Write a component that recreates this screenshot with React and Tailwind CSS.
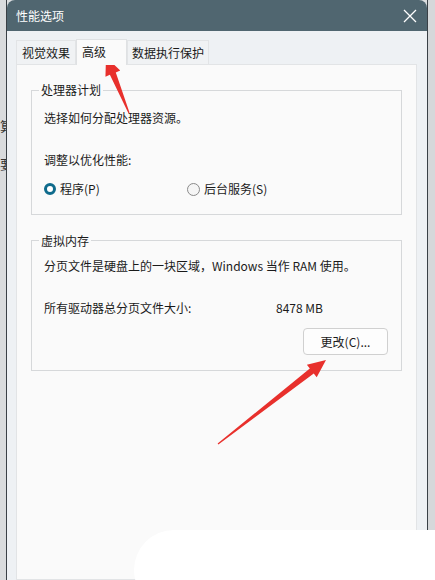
import React from "react";

const font = { fontFamily: '"Microsoft YaHei", "Noto Sans CJK SC", "Noto Sans", sans-serif' };

function Arrow({ x1, y1, x2, y2 }) {
  const dx = x2 - x1, dy = y2 - y1;
  const len = Math.hypot(dx, dy);
  const ux = dx / len, uy = dy / len;
  const px = -uy, py = ux;
  const hl = 18, hw = 8, sw = 3.2;
  const bx = x2 - ux * hl, by = y2 - uy * hl;
  const pts = [
    [x1 + px * 0.6, y1 + py * 0.6],
    [bx + px * sw, by + py * sw],
    [bx + px * hw, by + py * hw],
    [x2, y2],
    [bx - px * hw, by - py * hw],
    [bx - px * sw, by - py * sw],
    [x1 - px * 0.6, y1 - py * 0.6],
  ];
  return <polygon points={pts.map((p) => p.join(",")).join(" ")} fill="#e8302c" />;
}

export default function App() {
  return (
    <div className="relative w-[435px] h-[580px] overflow-hidden bg-[#dcdee0] flex" style={font}>
      {/* left background strip */}
      <div className="w-[7px] shrink-0 bg-[#d9dbdd] border-r border-[#3a4046] relative overflow-hidden text-[13px] text-[#333]">
        <div className="absolute right-[0px] top-[118px] w-[6px] overflow-hidden leading-[16px]">算</div>
        <div className="absolute right-[0px] top-[156px] w-[6px] overflow-hidden leading-[16px]">要</div>
      </div>
      {/* window */}
      <div className="w-[420px] shrink-0 flex flex-col bg-[#eef1f4] rounded-t-[8px] overflow-hidden">
        <div className="h-[31px] bg-[#506670] flex items-center justify-between pl-[9px] pr-[10px] shrink-0">
          <span className="text-white text-[12px]">性能选项</span>
          <svg width="14" height="14" viewBox="0 0 14 14">
            <path d="M1 1 L13 13 M13 1 L1 13" stroke="#ffffff" strokeWidth="1.3" />
          </svg>
        </div>
        <div className="flex-1 flex flex-col pl-[9px] pr-[10px]">
          <div className="flex items-end h-[33px] text-[12px] text-[#1a1a1a]">
            <div className="h-[24px] px-[5px] flex items-center border border-b-0 border-[#e2e4e6] bg-[#f0f2f4]">视觉效果</div>
            <div className="h-[26px] pl-[5px] pr-[20px] flex items-start pt-[3px] border border-b-0 border-[#dfe1e3] bg-[#fafafa] -mb-px relative z-10">高级</div>
            <div className="h-[24px] px-[4px] flex items-center border border-b-0 border-[#e2e4e6] bg-[#f0f2f4]">数据执行保护</div>
          </div>
          <div className="flex-1 bg-[#fafafa] border border-[#e2e4e6] pt-[25px] px-[14px] text-[12px] text-[#1a1a1a]">
            {/* group 1 */}
            <div className="relative border border-[#d6d8da] h-[125px] px-[12px] pt-[17px]">
              <div className="absolute left-[7px] top-[-11px] bg-[#fafafa] px-[2px] leading-[20px]">处理器计划</div>
              <div className="leading-[20px]">选择如何分配处理器资源。</div>
              <div className="leading-[20px] mt-[22px]">调整以优化性能:</div>
              <div className="flex items-center mt-[9px] leading-[20px]">
                <div className="flex items-center w-[143px]">
                  <span className="w-[12px] h-[12px] rounded-full border-[3px] border-[#0f6b8c] bg-white mr-[4px]" />
                  <span>程序(P)</span>
                </div>
                <div className="flex items-center">
                  <span className="w-[13px] h-[13px] rounded-full border border-[#8a8a8a] bg-[#f5f5f5] mr-[4px]" />
                  <span>后台服务(S)</span>
                </div>
              </div>
            </div>
            {/* group 2 */}
            <div className="relative border border-[#d6d8da] h-[131px] mt-[25px] px-[12px] pt-[15px]">
              <div className="absolute left-[7px] top-[-10px] bg-[#fafafa] px-[2px] leading-[20px]">虚拟内存</div>
              <div className="leading-[20px]">分页文件是硬盘上的一块区域，Windows 当作 RAM 使用。</div>
              <div className="flex leading-[20px] mt-[22px]">
                <span className="w-[232px]">所有驱动器总分页文件大小:</span>
                <span>8478 MB</span>
              </div>
              <div className="flex justify-end mt-[10px] pr-[1px]">
                <div className="w-[85px] h-[27px] border border-[#d0d0d0] rounded-[4px] bg-[#fdfdfd] flex items-center justify-center">更改(C)...</div>
              </div>
            </div>
          </div>
        </div>
      </div>
      {/* right strip */}
      <div className="flex-1 bg-[#d6d8da] border-l border-[#3a4046]" />
      {/* white blob over the bottom */}
      <div className="absolute left-[134px] top-[530px] w-[330px] h-[80px] bg-white rounded-l-[40px]" />
      {/* arrows */}
      <svg className="absolute left-0 top-0 pointer-events-none" width="435" height="580">
        <Arrow x1={129} y1={113} x2={106} y2={57} />
        <Arrow x1={218} y1={444} x2={326} y2={360} />
      </svg>
    </div>
  );
}
